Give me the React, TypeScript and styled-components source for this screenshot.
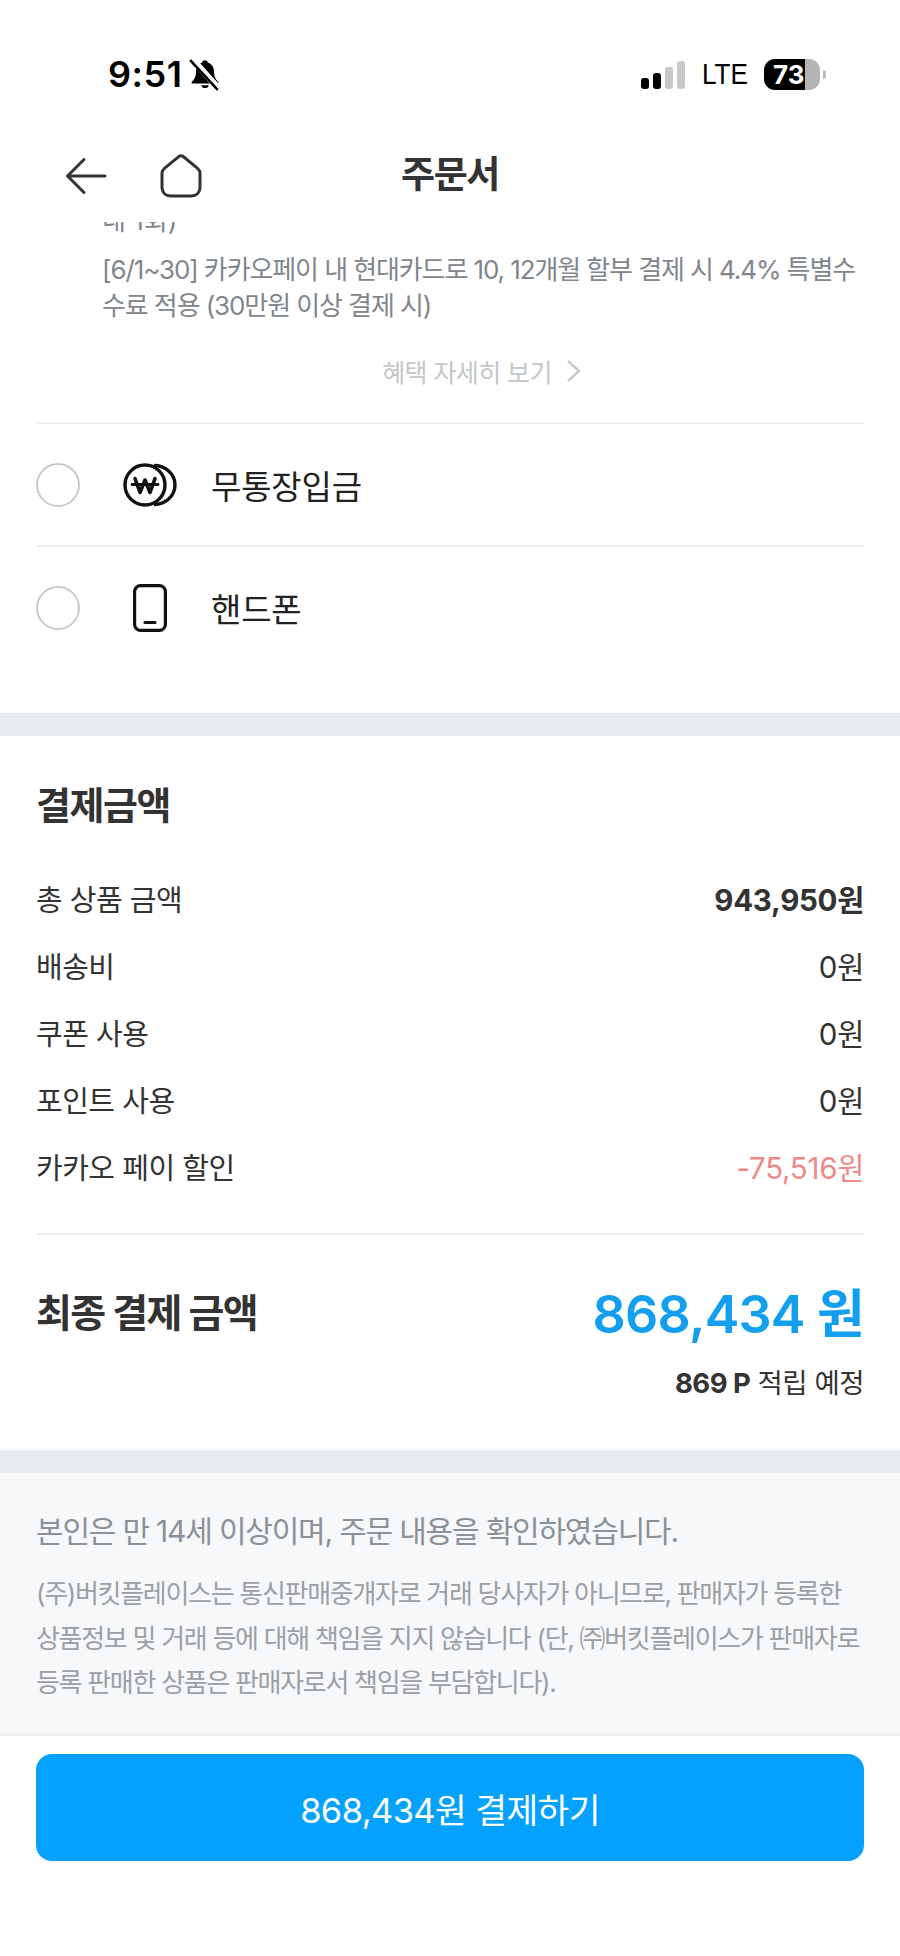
import React from "react";
import styled, { createGlobalStyle } from "styled-components";

const GlobalStyle = createGlobalStyle`
  html, body {
    margin: 0;
    padding: 0;
    background: #fff;
  }
  body {
    font-family: Inter, "Noto Sans CJK KR", sans-serif;
    color: #222;
  }
  * {
    box-sizing: border-box;
  }
`;

const PRICE_ROWS = [
  { label: "총 상품 금액", value: "943,950원", strong: true },
  { label: "배송비", value: "0원" },
  { label: "쿠폰 사용", value: "0원" },
  { label: "포인트 사용", value: "0원" },
  { label: "카카오 페이 할인", value: "-75,516원", discount: true },
];

const SIGNAL_BARS = [
  { height: 11, on: true },
  { height: 16, on: true },
  { height: 22, on: false },
  { height: 28, on: false },
];

const BellOff = () => (
  <svg width="34" height="34" viewBox="0 0 32 32">
    <path
      d="M16 3c-1.5 0-2.6 1-2.9 2.4C9 6.700 7.500 10 7.500 14c0 4.500-1.500 7-4 9.500V25h25v-1.500c-2.500-2.500-4-5-4-9.500 0-4-1.500-7.300-5.600-8.600C18.600 4 17.500 3 16 3z"
      fill="#000"
    />
    <path d="M12.500 26.500a3.600 3.600 0 0 0 7 0z" fill="#000" />
    <path d="M3 1l27 30" stroke="#fff" strokeWidth="6" />
    <path d="M2 3l26 28" stroke="#000" strokeWidth="2.400" />
  </svg>
);

const BackArrow = () => (
  <svg width="42" height="38" viewBox="0 0 42 38" fill="none" stroke="#333" strokeWidth="3" strokeLinecap="round" strokeLinejoin="round">
    <path d="M40 19H3" />
    <path d="M19 2.500L2.500 19 19 35.500" />
  </svg>
);

const HomeIcon = () => (
  <svg width="42" height="44" viewBox="0 0 42 44" fill="none" stroke="#333" strokeWidth="3" strokeLinejoin="round">
    <path d="M18.500 2.800c1.400-1.100 3.600-1.100 5 0l13.500 11c1.300 1.100 3 2.600 3 5V33c0 5.500-3.500 9-9 9H11c-5.500 0-9-3.500-9-9V18.800c0-2.400 1.700-3.900 3-5z" />
  </svg>
);

const CoinIcon = () => (
  <svg width="54" height="44" viewBox="0 0 54 44" fill="none" stroke="#111" strokeWidth="3.400">
    <path d="M31 2.500c11 0 21 8 21 19.500s-10 19.500-21 19.500" />
    <circle cx="22" cy="22" r="20" />
    <path d="M12 15.500l5 14 5-12.500 5 12.500 5-14" strokeWidth="3.600" strokeLinejoin="round" strokeLinecap="round" />
    <path d="M9 21.500h26" strokeWidth="2.800" strokeLinecap="round" />
  </svg>
);

const PhoneIcon = () => (
  <svg width="34" height="48" viewBox="0 0 34 48" fill="none" stroke="#111" strokeWidth="3.200">
    <rect x="1.600" y="1.600" width="30.800" height="44.800" rx="6" />
    <path d="M12 38.500h10" strokeLinecap="round" strokeWidth="3.200" />
  </svg>
);

const App: React.FC = () => {
  return (
    <Page>
      <GlobalStyle />
      <StatusBar>
        <TimeGroup>
          <Time>9:51</Time>
          <BellOff />
        </TimeGroup>
        <StatusRight>
          <Signal>
            {SIGNAL_BARS.map((bar) => (
              <SignalBar key={bar.height} $height={bar.height} $on={bar.on} />
            ))}
          </Signal>
          <Network>LTE</Network>
          <Battery>73</Battery>
        </StatusRight>
      </StatusBar>

      <Header>
        <HeaderIcons>
          <BackArrow />
          <HomeIcon />
        </HeaderIcons>
        <HeaderTitle>주문서</HeaderTitle>
      </Header>

      <BenefitClip>
        <BenefitCutLine>내 1회)</BenefitCutLine>
        <BenefitText>
          [6/1~30] 카카오페이 내 현대카드로 10, 12개월 할부 결제 시 4.4% 특별수
          <br />
          수료 적용 (30만원 이상 결제 시)
        </BenefitText>
      </BenefitClip>
      <BenefitMore>
        혜택 자세히 보기
        <svg width="16" height="24" viewBox="0 0 16 24" fill="none" stroke="#c6c9cc" strokeWidth="2.400">
          <path d="M2 2l11 10L2 22" />
        </svg>
      </BenefitMore>

      <MethodList>
        <MethodRow>
          <Radio />
          <MethodIcon>
            <CoinIcon />
          </MethodIcon>
          <MethodName>무통장입금</MethodName>
        </MethodRow>
        <MethodRow>
          <Radio />
          <MethodIcon>
            <PhoneIcon />
          </MethodIcon>
          <MethodName>핸드폰</MethodName>
        </MethodRow>
      </MethodList>

      <Band />

      <PriceSection>
        <SectionTitle>결제금액</SectionTitle>
        <PriceRows>
          {PRICE_ROWS.map((row) => (
            <PriceRow key={row.label}>
              <span>{row.label}</span>
              <PriceValue $strong={row.strong} $discount={row.discount}>
                {row.value}
              </PriceValue>
            </PriceRow>
          ))}
        </PriceRows>
        <FinalBlock>
          <FinalRow>
            <FinalLabel>최종 결제 금액</FinalLabel>
            <FinalAmount>868,434 원</FinalAmount>
          </FinalRow>
          <PointNote>
            <b>869 P</b> 적립 예정
          </PointNote>
        </FinalBlock>
      </PriceSection>

      <Band />

      <Notice>
        <NoticeLead>본인은 만 14세 이상이며, 주문 내용을 확인하였습니다.</NoticeLead>
        <NoticeBody>
          (주)버킷플레이스는 통신판매중개자로 거래 당사자가 아니므로, 판매자가 등록한
          <br />
          상품정보 및 거래 등에 대해 책임을 지지 않습니다 (단, ㈜버킷플레이스가 판매자로
          <br />
          등록 판매한 상품은 판매자로서 책임을 부담합니다).
        </NoticeBody>
      </Notice>

      <PayBar>
        <PayButton>868,434원 결제하기</PayButton>
      </PayBar>
    </Page>
  );
};

const Page = styled.div`
  width: 900px;
  height: 1956px;
  overflow: hidden;
  background: #fff;
  display: flex;
  flex-direction: column;
`;

const StatusBar = styled.div`
  height: 146px;
  padding: 52px 80px 0 108px;
  display: flex;
  justify-content: space-between;
  align-items: flex-start;
`;

const TimeGroup = styled.div`
  display: flex;
  align-items: center;
  gap: 6px;
  height: 44px;
`;

const Time = styled.span`
  font-size: 36px;
  font-weight: 600;
  color: #000;
  letter-spacing: 0.5px;
`;

const StatusRight = styled.div`
  display: flex;
  align-items: center;
  height: 44px;
`;

const Signal = styled.div`
  display: flex;
  align-items: flex-end;
  gap: 4px;
  height: 28px;
  margin-top: 1px;
`;

const SignalBar = styled.i<{ $height: number; $on: boolean }>`
  display: block;
  width: 8px;
  height: ${(p) => p.$height}px;
  border-radius: 3px;
  background: ${(p) => (p.$on ? "#000" : "#c8c8c8")};
`;

const Network = styled.span`
  margin-left: 17px;
  width: 45px;
  font-family: "Liberation Sans", sans-serif;
  font-size: 30px;
  color: #000;
  transform: scaleX(0.87);
  transform-origin: left center;
  white-space: nowrap;
`;

const Battery = styled.span`
  position: relative;
  margin-left: 17px;
  width: 56px;
  height: 31px;
  border-radius: 11px;
  background: linear-gradient(90deg, #000 0 41px, #b5b5b5 41px);
  color: #fff;
  font-size: 26px;
  font-weight: 700;
  line-height: 31px;
  padding-left: 9px;
  &::after {
    content: "";
    position: absolute;
    right: -6px;
    top: 11px;
    width: 3px;
    height: 9px;
    border-radius: 0 3px 3px 0;
    background: #bbb;
  }
`;

const Header = styled.div`
  position: relative;
  height: 72px;
  padding-bottom: 20px;
  display: flex;
  align-items: center;
  justify-content: center;
`;

const HeaderIcons = styled.div`
  position: absolute;
  left: 65px;
  top: 8px;
  display: flex;
  gap: 53px;
  align-items: flex-start;
  svg:first-child {
    margin-top: 3px;
  }
`;

const HeaderTitle = styled.h1`
  margin: 0;
  font-size: 37px;
  font-weight: 700;
  letter-spacing: -1.4px;
  color: #333;
`;

const BenefitClip = styled.div`
  height: 104px;
  margin-top: 4px;
  overflow: hidden;
  padding-left: 102px;
`;

const BenefitCutLine = styled.div`
  margin: -19px 0 13px;
  font-size: 26px;
  line-height: 36px;
  color: #80868c;
`;

const BenefitText = styled.p`
  margin: 0;
  font-size: 26px;
  line-height: 36px;
  color: #80868c;
  white-space: nowrap;
  letter-spacing: -1.1px;
`;

const BenefitMore = styled.div`
  margin-top: 25px;
  height: 40px;
  display: flex;
  align-items: center;
  justify-content: center;
  gap: 14px;
  padding-left: 64px;
  font-size: 25px;
  color: #c4c7ca;
  letter-spacing: -0.6px;
`;

const MethodList = styled.div`
  margin: 31px 36px 45px;
`;

const MethodRow = styled.div`
  height: 123px;
  border-top: 2px solid #eceef0;
  display: flex;
  align-items: center;
`;

const Radio = styled.span`
  width: 44px;
  height: 44px;
  border-radius: 50%;
  border: 2px solid #c8c9cb;
`;

const MethodIcon = styled.span`
  width: 54px;
  height: 48px;
  margin-left: 43px;
  display: flex;
  align-items: center;
  justify-content: center;
`;

const MethodName = styled.span`
  margin-left: 34px;
  font-size: 33px;
  letter-spacing: -0.2px;
  color: #222;
`;

const Band = styled.div`
  height: 23px;
  flex: none;
  background: #e9ecef;
`;

const PriceSection = styled.section`
  height: 714px;
  flex: none;
  padding: 44px 36px 0;
`;

const SectionTitle = styled.h2`
  margin: 0;
  font-size: 38px;
  line-height: 50px;
  font-weight: 700;
  letter-spacing: -1.5px;
  color: #333;
`;

const PriceRows = styled.div`
  margin-top: 34px;
  padding-bottom: 34px;
  border-bottom: 2px solid #eceef0;
  display: grid;
  grid-auto-rows: 67px;
`;

const PriceRow = styled.div`
  display: flex;
  justify-content: space-between;
  align-items: center;
  font-size: 29px;
  letter-spacing: -0.5px;
  color: #333;
`;

const PriceValue = styled.span<{ $strong?: boolean; $discount?: boolean }>`
  font-size: 29.500px;
  letter-spacing: -0.3px;
  font-weight: ${(p) => (p.$strong ? 700 : 400)};
  color: ${(p) => (p.$discount ? "#ee8a88" : "#333")};
`;

const FinalBlock = styled.div`
  margin-top: 39px;
`;

const FinalRow = styled.div`
  display: flex;
  justify-content: space-between;
  align-items: center;
  height: 72px;
`;

const FinalLabel = styled.span`
  font-size: 39px;
  font-weight: 700;
  letter-spacing: -1.6px;
  color: #333;
`;

const FinalAmount = styled.span`
  font-size: 52px;
  font-weight: 600;
  letter-spacing: -0.8px;
  color: #129ff0;
`;

const PointNote = styled.div`
  margin-top: 15px;
  text-align: right;
  font-size: 27.500px;
  letter-spacing: -0.5px;
  color: #333;
  b {
    font-weight: 700;
  }
`;

const Notice = styled.section`
  height: 263px;
  flex: none;
  padding: 36px 36px 0;
  background: #f6f8fa;
  border-bottom: 3px solid #eceef0;
`;

const NoticeLead = styled.p`
  margin: 0;
  font-size: 30px;
  line-height: 44px;
  letter-spacing: -1.2px;
  color: #8b9198;
`;

const NoticeBody = styled.p`
  margin: 19px 0 0;
  font-size: 26px;
  line-height: 44.500px;
  letter-spacing: -1.3px;
  white-space: nowrap;
  color: #9a9fa5;
`;

const PayBar = styled.div`
  padding: 18px 36px 0;
`;

const PayButton = styled.button`
  width: 100%;
  height: 107px;
  border: none;
  border-radius: 16px;
  background: #05a1ff;
  color: #fff;
  font-family: inherit;
  font-size: 34.500px;
  letter-spacing: -0.6px;
`;

export default App;
